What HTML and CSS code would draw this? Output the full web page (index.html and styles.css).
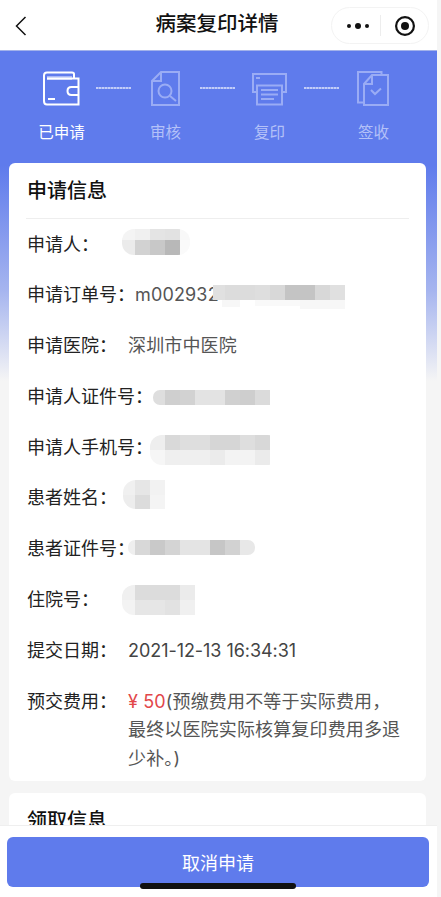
FILE: index.html
```html
<!DOCTYPE html>
<html lang="zh-CN">
<head>
<meta charset="utf-8">
<title>病案复印详情</title>
<link rel="stylesheet" href="styles.css">
</head>
<body>
<div class="page">
  <header class="nav">
    <svg class="back" viewBox="0 0 12 20" width="12" height="20"><path d="M10.5 1 L1.5 10 L10.5 19" fill="none" stroke="#111" stroke-width="1.5"/></svg>
    <h1 class="nav-title">病案复印详情</h1>
    <div class="capsule">
      <svg class="capsule-dots" viewBox="0 0 24 8" width="24" height="8"><circle cx="3" cy="4" r="2" fill="#111"/><circle cx="12" cy="4" r="3" fill="#111"/><circle cx="21" cy="4" r="2" fill="#111"/></svg>
      <span class="capsule-line"></span>
      <svg class="capsule-target" viewBox="0 0 22 22" width="22" height="22"><circle cx="11" cy="11" r="8.9" fill="none" stroke="#111" stroke-width="2.2"/><circle cx="11" cy="11" r="4" fill="#111"/></svg>
    </div>
  </header>

  <main class="content">
    <section class="steps">
      <div class="step step-on">
        <svg class="step-icon" viewBox="43 71 37 35" width="37" height="35">
          <path d="M47 76 H72 V80 H47 Z" fill="#a9b8f6"/>
          <path d="M74 78.500 V74 Q74 72.500 72 72.500 H47 Q44 72.500 44 75.500 V101 Q44 104.500 47 104.500 H78.500 V78.500 H47" fill="none" stroke="#fff" stroke-width="2"/>
          <path d="M78.500 87 H71.500 Q67.500 87 67.500 91 Q67.500 95 71.500 95 H78.500" fill="none" stroke="#fff" stroke-width="2"/>
          <path d="M48 99 H55" stroke="#fff" stroke-width="2"/>
        </svg>
        <span class="step-name">已申请</span>
      </div>
      <div class="dash"></div>
      <div class="step">
        <svg class="step-icon" viewBox="147 71 37 35" width="37" height="35">
          <path d="M161 72 H179 V105 H152 V81 Z M161 72 V81 H152" fill="none" stroke="#9aacf5" stroke-width="2"/>
          <circle cx="165" cy="91" r="6.500" fill="none" stroke="#9aacf5" stroke-width="2"/>
          <path d="M170 96 L176 101" stroke="#9aacf5" stroke-width="2"/>
        </svg>
        <span class="step-name">审核</span>
      </div>
      <div class="dash"></div>
      <div class="step">
        <svg class="step-icon" viewBox="251 71 37 35" width="37" height="35">
          <path d="M256 92 H253 V74 H286 V92 H283" fill="none" stroke="#9aacf5" stroke-width="2"/>
          <path d="M257 85.500 H282 V104.500 H257 Z" fill="none" stroke="#9aacf5" stroke-width="2"/>
          <path d="M256 78 H260 M261 90 H278 M261 94.500 H278 M261 99 H274" stroke="#9aacf5" stroke-width="1.800"/>
        </svg>
        <span class="step-name">复印</span>
      </div>
      <div class="dash"></div>
      <div class="step">
        <svg class="step-icon" viewBox="356 71 37 35" width="37" height="35">
          <path d="M364 102.500 H359 V72 H382.500 V75" fill="none" stroke="#9aacf5" stroke-width="2"/>
          <path d="M373 75 H389 V105 H365 V84 Z M373 75 V84 H365" fill="none" stroke="#9aacf5" stroke-width="2"/>
          <path d="M372 90 L376 94 L382 88.500" fill="none" stroke="#9aacf5" stroke-width="2"/>
        </svg>
        <span class="step-name">签收</span>
      </div>
    </section>

    <section class="card">
      <h2 class="card-title">申请信息</h2>
      <div class="rows">
        <div class="row"><span class="label">申请人&#xFF1A;</span></div>
        <div class="row"><span class="label">申请订单号&#xFF1A;</span><span class="value">m002932</span></div>
        <div class="row"><span class="label">申请医院&#xFF1A;</span><span class="value">深圳市中医院</span></div>
        <div class="row"><span class="label">申请人证件号&#xFF1A;</span></div>
        <div class="row"><span class="label">申请人手机号&#xFF1A;</span></div>
        <div class="row"><span class="label">患者姓名&#xFF1A;</span></div>
        <div class="row"><span class="label">患者证件号&#xFF1A;</span></div>
        <div class="row"><span class="label">住院号&#xFF1A;</span></div>
        <div class="row"><span class="label">提交日期&#xFF1A;</span><span class="value date">2021-12-13 16:34:31</span></div>
        <div class="row"><span class="label">预交费用&#xFF1A;</span><span class="value"><span class="price">¥ 50</span>(预缴费用不等于实际费用&#xFF0C;最终以医院实际核算复印费用多退少补。)</span></div>
      </div>
    </section>

    <section class="card">
      <h2 class="card-title">领取信息</h2>
    </section>
  </main>

  <svg class="redactions" viewBox="0 0 437 897" width="437" height="897" shape-rendering="crispEdges">
    <defs>
      <clipPath id="r1"><rect x="122" y="229" width="68" height="26" rx="12"/></clipPath>
      <clipPath id="r2"><rect x="150" y="435" width="130" height="30" rx="12"/></clipPath>
      <clipPath id="r3"><rect x="123" y="480" width="60" height="29" rx="13"/></clipPath>
      <clipPath id="r4"><rect x="128" y="540" width="127" height="15" rx="7"/></clipPath>
      <clipPath id="r5"><rect x="122" y="585" width="90" height="30" rx="12"/></clipPath>
      <clipPath id="r6"><rect x="153" y="390" width="130" height="15" rx="7"/></clipPath>
    </defs>
    <g clip-path="url(#r1)">
      <rect x="122" y="229" width="13" height="11" fill="#f4f4f4"/><rect x="135" y="229" width="15" height="11" fill="#f0f0f0"/><rect x="150" y="229" width="15" height="11" fill="#e4e4e4"/><rect x="165" y="229" width="15" height="11" fill="#e2e2e2"/><rect x="180" y="229" width="10" height="11" fill="#f8f8f8"/>
      <rect x="122" y="240" width="13" height="15" fill="#ebebeb"/><rect x="135" y="240" width="15" height="15" fill="#d2d2d2"/><rect x="150" y="240" width="15" height="15" fill="#c8c8c8"/><rect x="165" y="240" width="15" height="15" fill="#b8b8b8"/><rect x="180" y="240" width="10" height="15" fill="#fafafa"/>
    </g>
    <g>
      <rect x="213" y="285" width="12" height="15" fill="#e0e0e0"/><rect x="225" y="285" width="30" height="15" fill="#dcdcdc"/><rect x="255" y="285" width="15" height="15" fill="#dedede"/><rect x="270" y="285" width="15" height="15" fill="#d8d8d8"/><rect x="285" y="285" width="30" height="15" fill="#c4c4c4"/><rect x="315" y="285" width="15" height="15" fill="#d8d8d8"/><rect x="330" y="285" width="15" height="15" fill="#e0e0e0"/>
      <rect x="222" y="300" width="18" height="7" fill="#f7f7f7"/><rect x="255" y="300" width="45" height="6" fill="#f9f9f9"/><rect x="300" y="300" width="45" height="9" fill="#f7f7f7"/>
    </g>
    <g clip-path="url(#r6)">
      <rect x="153" y="390" width="12" height="15" fill="#dedede"/><rect x="165" y="390" width="15" height="15" fill="#cfcfcf"/><rect x="180" y="390" width="15" height="15" fill="#d2d2d2"/><rect x="195" y="390" width="30" height="15" fill="#e3e3e3"/><rect x="225" y="390" width="15" height="15" fill="#d0d0d0"/><rect x="240" y="390" width="15" height="15" fill="#cecece"/><rect x="255" y="390" width="15" height="15" fill="#dbdbdb"/>
    </g>
    <g clip-path="url(#r2)">
      <rect x="150" y="435" width="15" height="15" fill="#eeeeee"/><rect x="165" y="435" width="15" height="15" fill="#d9d9d9"/><rect x="180" y="435" width="30" height="15" fill="#dedede"/><rect x="210" y="435" width="30" height="15" fill="#d6d6d6"/><rect x="240" y="435" width="15" height="15" fill="#dedede"/><rect x="255" y="435" width="15" height="15" fill="#d8d8d8"/>
      <rect x="150" y="450" width="15" height="15" fill="#f6f6f6"/><rect x="165" y="450" width="45" height="15" fill="#efefef"/><rect x="210" y="450" width="15" height="15" fill="#ebebeb"/><rect x="225" y="450" width="30" height="15" fill="#f3f3f3"/><rect x="255" y="450" width="15" height="15" fill="#ebebeb"/>
    </g>
    <g clip-path="url(#r3)">
      <rect x="123" y="480" width="12" height="15" fill="#f0f0f0"/><rect x="135" y="480" width="15" height="15" fill="#e6e6e6"/><rect x="150" y="480" width="15" height="15" fill="#f2f2f2"/>
      <rect x="123" y="495" width="12" height="14" fill="#ededed"/><rect x="135" y="495" width="15" height="14" fill="#dcdcdc"/><rect x="150" y="495" width="15" height="14" fill="#f4f4f4"/>
    </g>
    <g clip-path="url(#r4)">
      <rect x="128" y="540" width="7" height="15" fill="#efefef"/><rect x="135" y="540" width="15" height="15" fill="#d8d8d8"/><rect x="150" y="540" width="15" height="15" fill="#c9c9c9"/><rect x="165" y="540" width="15" height="15" fill="#d4d4d4"/><rect x="180" y="540" width="30" height="15" fill="#e4e4e4"/><rect x="210" y="540" width="15" height="15" fill="#c6c6c6"/><rect x="225" y="540" width="15" height="15" fill="#d2d2d2"/><rect x="240" y="540" width="15" height="15" fill="#e8e8e8"/>
    </g>
    <g clip-path="url(#r5)">
      <rect x="122" y="585" width="13" height="15" fill="#f0f0f0"/><rect x="135" y="585" width="45" height="15" fill="#dcdcdc"/><rect x="180" y="585" width="15" height="15" fill="#ebebeb"/>
      <rect x="122" y="600" width="13" height="15" fill="#f3f3f3"/><rect x="135" y="600" width="30" height="15" fill="#e6e6e6"/><rect x="165" y="600" width="15" height="15" fill="#e2e2e2"/><rect x="180" y="600" width="15" height="15" fill="#f0f0f0"/>
    </g>
  </svg>

  <footer class="footer">
    <button class="cancel" type="button">取消申请</button>
    <span class="home-bar"></span>
  </footer>
</div>
</body>
</html>
```
FILE: styles.css
```css
* { box-sizing: border-box; }
html, body { margin: 0; padding: 0; height: 100%; background: #f5f5f5; overflow: hidden; }
body { font-family: "Inter", "Noto Sans CJK SC", sans-serif; color: #222; }
.page { position: relative; width: 437px; height: 897px; overflow: hidden; background: #f5f5f5; }

.nav { position: relative; height: 51px; background: #fff; border-bottom: 1px solid #a3b2ea; display: flex; align-items: center; justify-content: center; }
.back { position: absolute; left: 15px; top: 16px; }
.nav-title { margin: 0 0 2px -3px; font-size: 20.500px; line-height: 28px; font-weight: 500; color: #111; }
.capsule { position: absolute; left: 331px; top: 7px; width: 98px; height: 37px; border: 1px solid #f3f3f3; border-radius: 19px; display: flex; align-items: center; }
.capsule-dots { margin-left: 14px; }
.capsule-line { width: 1px; height: 21px; background: #ededed; margin-left: 10px; }
.capsule-target { margin-left: 13px; }

.content { background: linear-gradient(#5f7bec 0, #5f7bec 115px, #a6b5ef 240px, #f5f5f5 330px); }
.steps { display: flex; justify-content: center; align-items: flex-start; padding: 20px 2px 19px 0; }
.step { width: 51px; display: flex; flex-direction: column; align-items: center; }
.step-icon { display: block; }
.step-name { margin-top: 16px; font-size: 15.500px; line-height: 22px; color: #b4c1f8; white-space: nowrap; }
.step-on .step-name { color: #fff; }
.dash { width: 53px; height: 35px; position: relative; }
.dash::after { content: ""; position: absolute; left: 9px; right: 9px; top: 16px; height: 2px; background: repeating-linear-gradient(90deg, rgba(255,255,255,.62) 0 2px, rgba(255,255,255,.35) 2px 3px); }

.card { margin: 0 11px 12px 9px; padding: 0 17px 7.500px; background: #fff; border-radius: 6px; }
.card-title { margin: 0; padding: 14px 2px 13px 1px; font-size: 20px; line-height: 28px; font-weight: 500; color: #111; border-bottom: 1px solid #eeeeee; }
.rows { display: flex; flex-direction: column; gap: 22.300px; padding: 11.500px 0 0 1px; }
.row { display: flex; font-size: 18px; line-height: 28.500px; color: #222; }
.label { min-width: 101px; white-space: nowrap; flex: none; }
.value { color: #555; min-width: 0; width: 274px; letter-spacing: .15px; }
.date { color: #444; letter-spacing: -.05px; white-space: nowrap; }
.price { color: #e2474a; }

.redactions { position: absolute; left: 0; top: 0; pointer-events: none; }

.footer { position: absolute; left: 0; right: 0; bottom: 0; height: 72px; background: #fff; border-top: 1px solid #efefef; padding: 11px 8px 0 7px; }
.cancel { display: block; width: 100%; height: 50px; border: 0; border-radius: 6px; background: #5f7bec; color: #fff; font: inherit; font-size: 18px; padding: 0; }
.home-bar { position: absolute; left: 140px; top: 57px; width: 156px; height: 6px; border-radius: 3px; background: #111; }
```
